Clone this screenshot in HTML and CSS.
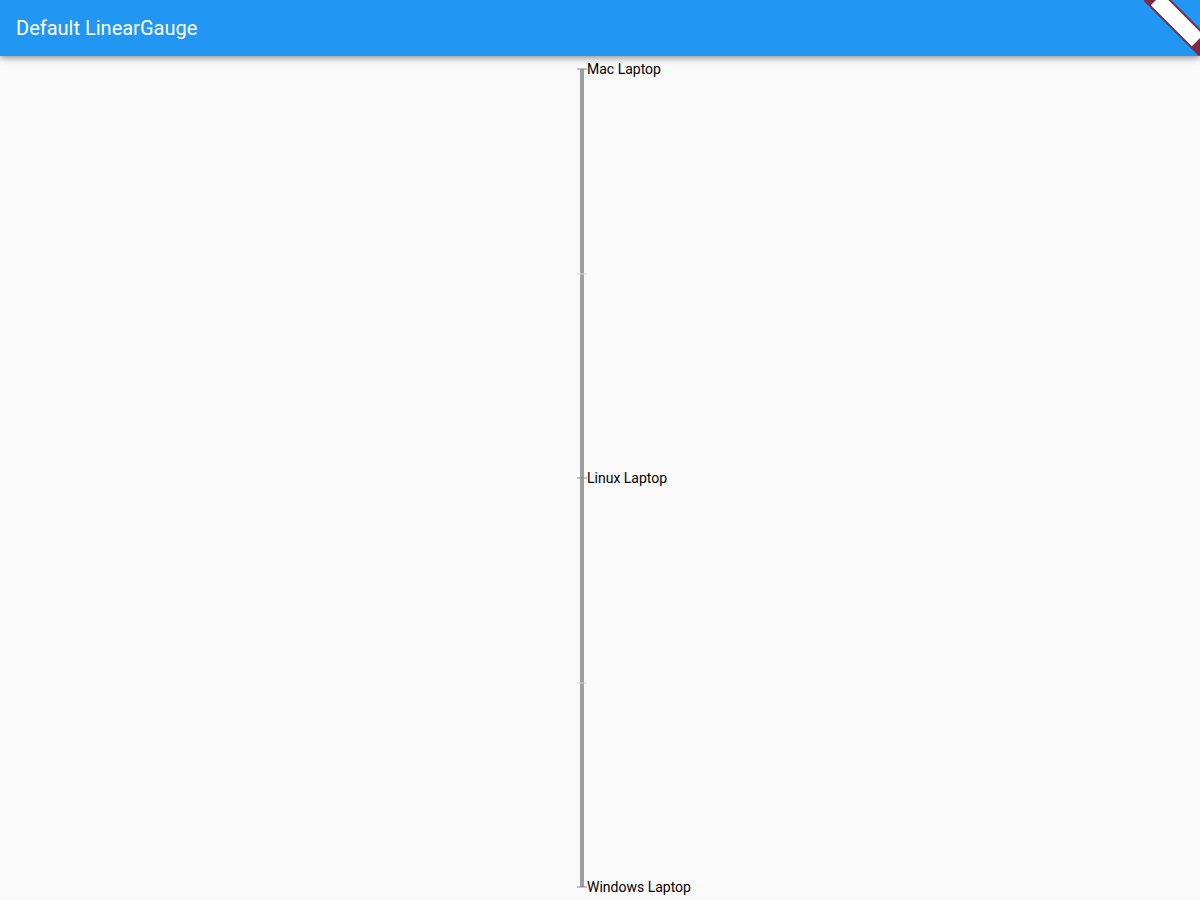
FILE: index.html
```html
<!DOCTYPE html>
<html>
<head>
<meta charset="utf-8">
<link rel="stylesheet" href="styles.css">
</head>
<body>
<header class="appbar">
  <h1 class="title">Default LinearGauge</h1>
</header>
<main class="content">
  <div class="gauge">
    <div class="bar"></div>
    <div class="tick major" style="top:0%"></div>
    <div class="tick minor" style="top:25%"></div>
    <div class="tick major" style="top:50%"></div>
    <div class="tick minor" style="top:75%"></div>
    <div class="tick major" style="top:100%"></div>
    <span class="label" style="top:0%">Mac Laptop</span>
    <span class="label" style="top:50%">Linux Laptop</span>
    <span class="label" style="top:100%">Windows Laptop</span>
  </div>
</main>
<div class="banner"><div class="ribbon"><div class="ribbon-inner"></div></div></div>
</body>
</html>
```
FILE: styles.css
```css
html, body {
  margin: 0;
  padding: 0;
  height: 100%;
  background: #fafafa;
  font-family: Roboto, "Liberation Sans", sans-serif;
  overflow: hidden;
}
.appbar {
  height: 56px;
  background: #2196f3;
  display: flex;
  align-items: center;
  padding: 0 16px;
  box-shadow: 0 2px 4px -1px rgba(0,0,0,0.2), 0 4px 5px 0 rgba(0,0,0,0.14), 0 1px 10px 0 rgba(0,0,0,0.12);
  position: relative;
  z-index: 1;
}
.title {
  margin: 0;
  color: #fff;
  font-size: 20px;
  font-weight: 400;
}
.content {
  display: flex;
  justify-content: center;
  padding-top: 13px;
}
.gauge {
  position: relative;
  width: 4px;
  height: 818px;
  margin-left: -36px;
}
.bar {
  position: absolute;
  left: 0;
  top: 0;
  width: 4px;
  height: 100%;
  background: #9e9e9e;
}
.tick {
  position: absolute;
  height: 1px;
  transform: translateY(-0.5px);
}
.tick.major {
  left: -3px;
  width: 10px;
  background: #8a8a8a;
}
.tick.minor {
  left: -3px;
  width: 10px;
  background: #d6d6d6;
}
.label {
  position: absolute;
  left: 7px;
  transform: translateY(-50%);
  font-size: 14px;
  line-height: 16px;
  color: #000;
  white-space: nowrap;
}
.banner {
  position: absolute;
  top: 0;
  right: 0;
  width: 56px;
  height: 56px;
  overflow: hidden;
  z-index: 2;
}
.ribbon {
  position: absolute;
  width: 100px;
  height: 20px;
  left: -17px;
  top: 10px;
  background: #7f2a43;
  transform: rotate(45deg);
  display: flex;
  align-items: center;
  justify-content: center;
}
.ribbon-inner {
  width: 58px;
  height: 16px;
  background: #fff;
}
```
